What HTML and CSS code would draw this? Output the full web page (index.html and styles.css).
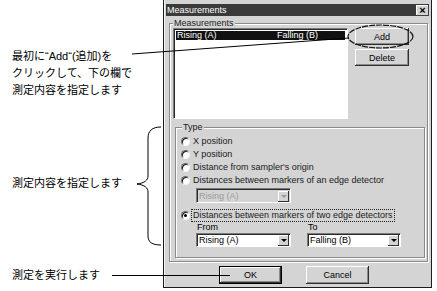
FILE: index.html
```html
<!DOCTYPE html>
<html>
	<head>
		<meta charset="UTF-8">
		<title>Measurements</title>
		<link rel="stylesheet" href="styles.css">
	</head>
	<body>
		<div class="page">
			<div class="notes">
				<p class="note note-add">最初に“Add“(追加)を<br>クリックして、下の欄で<br>測定内容を指定します</p>
				<p class="note note-type">測定内容を指定します</p>
				<p class="note note-ok">測定を実行します</p>
			</div>
			<div class="dialog">
				<div class="titlebar">
					<span class="title">Measurements</span>
					<span class="close">×</span>
				</div>
				<fieldset class="group group-meas">
					<legend>Measurements</legend>
					<div class="meas-top">
						<div class="listbox">
							<div class="list-row selected">
								<span class="col-a">Rising (A)</span>
								<span>Falling (B)</span>
							</div>
						</div>
						<div class="side-btns">
							<button class="btn">Add</button>
							<button class="btn">Delete</button>
						</div>
					</div>
					<fieldset class="group group-type">
						<legend>Type</legend>
						<div class="radio-row"><span class="radio"></span>X position</div>
						<div class="radio-row"><span class="radio"></span>Y position</div>
						<div class="radio-row"><span class="radio"></span>Distance from sampler's origin</div>
						<div class="radio-row"><span class="radio"></span>Distances between markers of an edge detector</div>
						<div class="combo combo-single disabled">
							<span class="combo-text">Rising (A)</span>
							<span class="combo-btn"><i class="arrow"></i></span>
						</div>
						<div class="radio-row radio-two"><span class="radio on"></span><span class="focus">Distances between markers of two edge detectors</span></div>
						<div class="fromto">
							<div class="field">
								<div class="field-label">From</div>
								<div class="combo">
									<span class="combo-text">Rising (A)</span>
									<span class="combo-btn"><i class="arrow"></i></span>
								</div>
							</div>
							<div class="field">
								<div class="field-label">To</div>
								<div class="combo">
									<span class="combo-text">Falling (B)</span>
									<span class="combo-btn"><i class="arrow"></i></span>
								</div>
							</div>
						</div>
					</fieldset>
				</fieldset>
				<div class="dlg-btns">
					<button class="btn btn-default">OK</button>
					<button class="btn">Cancel</button>
				</div>
			</div>
			<svg class="callouts" width="437" height="291" viewBox="0 0 437 291">
				<line x1="132" y1="54" x2="349" y2="38" stroke="#000" stroke-width="1"/>
				<ellipse cx="380.5" cy="36.5" rx="32.5" ry="11.5" fill="none" stroke="#111" stroke-width="1.2" stroke-dasharray="6 1"/>
				<path d="M161,127 C152,127 148,131 148,138 L148,176 C148,180 145,183 137,184 C145,185 148,188 148,192 L148,236 C148,242 152,245 161,245" fill="none" stroke="#000" stroke-width="1"/>
				<line x1="112" y1="275.5" x2="230" y2="275.5" stroke="#000" stroke-width="1"/>
			</svg>
		</div>
	</body>
</html>
```

FILE: styles.css
```css
*{
	margin:0;
	padding:0;
	box-sizing:border-box;
}
body{
	background:#fff;
	font-family:"Liberation Sans", "Noto Sans CJK JP", sans-serif;
}
.page{
	position:relative;
	display:flex;
	width:437px;
	height:291px;
	overflow:hidden;
}
/* left side notes */
.notes{
	width:163px;
	flex:none;
}
.note{
	margin-left:12px;
	font-size:11px;
	line-height:17px;
	color:#000;
	white-space:nowrap;
}
.note-add{
	margin-top:48px;
}
.note-type{
	margin-top:76px;
}
.note-ok{
	margin-top:75px;
}
.callouts{
	position:absolute;
	left:0;
	top:0;
	pointer-events:none;
}
/* dialog */
.dialog{
	width:269px;
	height:288px;
	flex:none;
	padding:4px 2px 0;
	background:#d4d4d4;
	border:1px solid #1c1c1c;
	border-top:none;
	box-shadow:inset 1px 0 #f4f4f4;
	font-size:9px;
	line-height:9px;
	color:#000;
	overflow:hidden;
}
.titlebar{
	display:flex;
	align-items:center;
	justify-content:space-between;
	height:12px;
	padding-left:1px;
	background:#3a3a3a;
	color:#fff;
}
.close{
	width:13px;
	height:11px;
	background:#d4d4d4;
	color:#000;
	font-size:11px;
	font-weight:bold;
	line-height:10px;
	text-align:center;
	box-shadow:inset -1px -1px #404040, inset 1px 1px #fff;
}
.group{
	border:1px solid #8a8a8a;
	box-shadow:1px 1px 0 #fff, inset 1px 1px 0 #fff;
	min-width:0;
}
.group legend{
	padding:0 1px;
	line-height:9px;
	background:#d4d4d4;
	color:#202020;
}
.group-meas{
	width:259px;
	margin:3px 0 0 3px;
	padding:0 3px 3px 3px;
}
.meas-top{
	display:flex;
	height:91px;
}
.listbox{
	width:175px;
	height:91px;
	padding:2px;
	background:#fff;
	border:1px solid #7a7a7a;
	border-right-color:#fff;
	border-bottom-color:#fff;
	box-shadow:inset 1px 1px #2a2a2a;
}
.list-row{
	display:flex;
	height:9px;
	line-height:9px;
	padding-left:1px;
}
.list-row.selected{
	background:#111;
	color:#fff;
}
.col-a{
	width:100px;
}
.side-btns{
	display:flex;
	flex-direction:column;
	gap:4px;
	margin-left:7px;
}
.btn{
	width:54px;
	height:17px;
	border:none;
	background:#d4d4d4;
	font-family:inherit;
	font-size:9px;
	color:#000;
	box-shadow:inset -1px -1px #303030, inset 1px 1px #fff, inset -2px -2px #8a8a8a;
}
.group-type{
	width:250px;
	margin:4px 0 0 2px;
	padding:3px 5px 10px 5px;
}
.group-type legend{
	margin-left:1px;
}
.radio-row{
	display:flex;
	align-items:center;
	height:13px;
	white-space:nowrap;
	color:#1a1a1a;
}
.radio{
	width:9px;
	height:9px;
	margin-right:3px;
	flex:none;
	border-radius:50%;
	background:#fff;
	border:1px solid;
	border-color:#6a6a6a #f4f4f4 #f4f4f4 #6a6a6a;
	box-shadow:inset 1px 1px #1a1a1a;
	position:relative;
}
.radio.on::after{
	content:"";
	position:absolute;
	left:2px;
	top:2px;
	width:3px;
	height:3px;
	border-radius:50%;
	background:#000;
}
.radio-two{
	height:14px;
	margin-top:5px;
}
.focus{
	margin-left:-2px;
	padding:1px 1px;
	border:1px dotted #202020;
}
.combo{
	display:flex;
	align-items:center;
	justify-content:space-between;
	width:95px;
	height:14px;
	background:#fff;
	border:1px solid #7a7a7a;
	border-right-color:#fff;
	border-bottom-color:#fff;
	box-shadow:inset 1px 1px #2a2a2a;
	padding:1px 1px 0 2px;
}
.combo-single{
	margin:1px 0 0 15px;
	height:15px;
}
.combo.disabled{
	background:#d4d4d4;
	color:#9a9a9a;
}
.combo-btn{
	display:flex;
	align-items:center;
	justify-content:center;
	width:11px;
	height:11px;
	background:#d4d4d4;
	box-shadow:inset -1px -1px #303030, inset 1px 1px #fff;
}
.arrow{
	width:0;
	height:0;
	border-left:3px solid transparent;
	border-right:3px solid transparent;
	border-top:3px solid #000;
}
.disabled .arrow{
	border-top-color:#9a9a9a;
}
.fromto{
	display:flex;
	gap:16px;
	margin-left:15px;
}
.field-label{
	height:11px;
	line-height:11px;
	padding-left:1px;
}
.field:last-child .combo{
	width:94px;
}
.dlg-btns{
	display:flex;
	gap:24px;
	margin-top:4px;
	padding-left:53px;
}
.dlg-btns .btn{
	width:63px;
	height:18px;
}
.btn-default{
	border:1px solid #000;
}
```
